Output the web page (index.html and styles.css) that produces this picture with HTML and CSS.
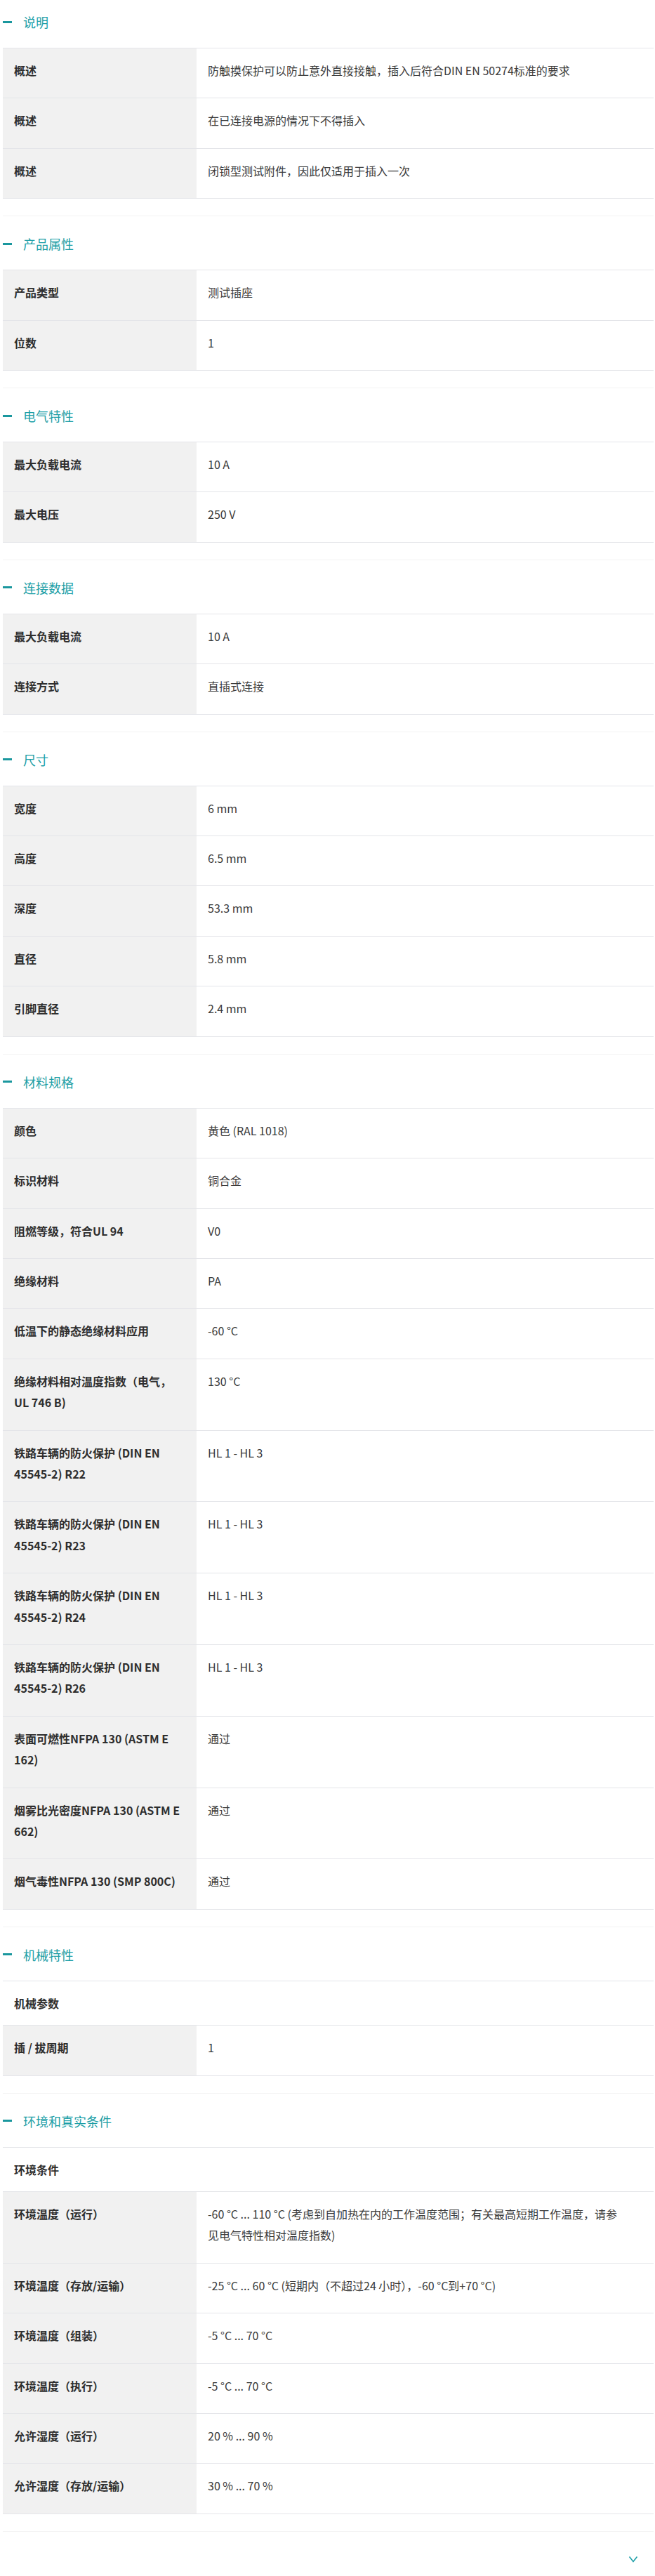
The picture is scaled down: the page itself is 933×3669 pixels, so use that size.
FILE: index.html
```html
<!DOCTYPE html>
<html lang="zh-CN">

<head>
    <meta charset="utf-8">
    <title>技术数据</title>
    <link rel="stylesheet" href="styles.css">
</head>

<body>
    <main class="specs">
        <section class="group">
            <h2 class="group-title"><span class="dash"></span>说明</h2>
            <div class="spec-table">
                <div class="row"><div class="label">概述</div><div class="value">防触摸保护可以防止意外直接接触，插入后符合DIN EN 50274标准的要求</div></div>
                <div class="row"><div class="label">概述</div><div class="value">在已连接电源的情况下不得插入</div></div>
                <div class="row"><div class="label">概述</div><div class="value">闭锁型测试附件，因此仅适用于插入一次</div></div>
            </div>
        </section>

        <section class="group">
            <h2 class="group-title"><span class="dash"></span>产品属性</h2>
            <div class="spec-table">
                <div class="row"><div class="label">产品类型</div><div class="value">测试插座</div></div>
                <div class="row"><div class="label">位数</div><div class="value">1</div></div>
            </div>
        </section>

        <section class="group">
            <h2 class="group-title"><span class="dash"></span>电气特性</h2>
            <div class="spec-table">
                <div class="row"><div class="label">最大负载电流</div><div class="value">10 A</div></div>
                <div class="row"><div class="label">最大电压</div><div class="value">250 V</div></div>
            </div>
        </section>

        <section class="group">
            <h2 class="group-title"><span class="dash"></span>连接数据</h2>
            <div class="spec-table">
                <div class="row"><div class="label">最大负载电流</div><div class="value">10 A</div></div>
                <div class="row"><div class="label">连接方式</div><div class="value">直插式连接</div></div>
            </div>
        </section>

        <section class="group">
            <h2 class="group-title"><span class="dash"></span>尺寸</h2>
            <div class="spec-table">
                <div class="row"><div class="label">宽度</div><div class="value">6 mm</div></div>
                <div class="row"><div class="label">高度</div><div class="value">6.5 mm</div></div>
                <div class="row"><div class="label">深度</div><div class="value">53.3 mm</div></div>
                <div class="row"><div class="label">直径</div><div class="value">5.8 mm</div></div>
                <div class="row"><div class="label">引脚直径</div><div class="value">2.4 mm</div></div>
            </div>
        </section>

        <section class="group">
            <h2 class="group-title"><span class="dash"></span>材料规格</h2>
            <div class="spec-table">
                <div class="row"><div class="label">颜色</div><div class="value">黄色 (RAL 1018)</div></div>
                <div class="row"><div class="label">标识材料</div><div class="value">铜合金</div></div>
                <div class="row"><div class="label">阻燃等级，符合UL 94</div><div class="value">V0</div></div>
                <div class="row"><div class="label">绝缘材料</div><div class="value">PA</div></div>
                <div class="row"><div class="label">低温下的静态绝缘材料应用</div><div class="value">-60 °C</div></div>
                <div class="row"><div class="label">绝缘材料相对温度指数（电气，UL 746 B)</div><div class="value">130 °C</div></div>
                <div class="row"><div class="label">铁路车辆的防火保护 (DIN EN 45545-2) R22</div><div class="value">HL 1 - HL 3</div></div>
                <div class="row"><div class="label">铁路车辆的防火保护 (DIN EN 45545-2) R23</div><div class="value">HL 1 - HL 3</div></div>
                <div class="row"><div class="label">铁路车辆的防火保护 (DIN EN 45545-2) R24</div><div class="value">HL 1 - HL 3</div></div>
                <div class="row"><div class="label">铁路车辆的防火保护 (DIN EN 45545-2) R26</div><div class="value">HL 1 - HL 3</div></div>
                <div class="row"><div class="label">表面可燃性NFPA 130 (ASTM E 162)</div><div class="value">通过</div></div>
                <div class="row"><div class="label">烟雾比光密度NFPA 130 (ASTM E 662)</div><div class="value">通过</div></div>
                <div class="row"><div class="label">烟气毒性NFPA 130 (SMP 800C)</div><div class="value">通过</div></div>
            </div>
        </section>

        <section class="group">
            <h2 class="group-title"><span class="dash"></span>机械特性</h2>
            <div class="spec-table">
                <div class="row subhead"><div class="label">机械参数</div></div>
                <div class="row"><div class="label">插 / 拔周期</div><div class="value">1</div></div>
            </div>
        </section>

        <section class="group">
            <h2 class="group-title"><span class="dash"></span>环境和真实条件</h2>
            <div class="spec-table">
                <div class="row subhead"><div class="label">环境条件</div></div>
                <div class="row"><div class="label">环境温度（运行）</div><div class="value">-60 °C ... 110 °C (考虑到自加热在内的工作温度范围；有关最高短期工作温度，请参见电气特性相对温度指数)</div></div>
                <div class="row"><div class="label">环境温度（存放/运输）</div><div class="value">-25 °C ... 60 °C (短期内（不超过24 小时），-60 °C到+70 °C)</div></div>
                <div class="row"><div class="label">环境温度（组装）</div><div class="value">-5 °C ... 70 °C</div></div>
                <div class="row"><div class="label">环境温度（执行）</div><div class="value">-5 °C ... 70 °C</div></div>
                <div class="row"><div class="label">允许湿度（运行）</div><div class="value">20 % ... 90 %</div></div>
                <div class="row"><div class="label">允许湿度（存放/运输）</div><div class="value">30 % ... 70 %</div></div>
            </div>
        </section>

        <div class="more">
            <button class="more-button" aria-label="展开">
                <svg width="14" height="10" viewBox="0 0 14 10">
                    <polyline points="1.5,1.5 7,8.5 12.5,1.5" fill="none" stroke="#1b9ea6" stroke-width="1.6"></polyline>
                </svg>
            </button>
        </div>
    </main>
</body>

</html>
```

FILE: styles.css
```css
:root {
    --teal: #1b9ea6;
    --line: #e4e5e9;
    font-family: "Noto Sans CJK SC", "Noto Sans", sans-serif;
}

body {
    margin: 0;
    padding: 0 2px 0 4px;
    background: white;
    color: #333;
}

.group {
    padding: 24px 0;
    border-bottom: 1px solid #f3f3f3;
}

.group:first-child {
    padding-top: 16px;
}

.group-title {
    display: flex;
    align-items: center;
    margin: 0 0 22px 0;
    font-size: 18px;
    font-weight: 400;
    line-height: 30px;
    color: var(--teal);
}

.dash {
    display: inline-block;
    width: 13px;
    height: 3px;
    margin-right: 16px;
    background: #1a979e;
}

.spec-table {
    border-top: 1px solid var(--line);
}

.row {
    display: grid;
    grid-template-columns: 276px 1fr;
    border-bottom: 1px solid var(--line);
    font-size: 16px;
    line-height: 30.4px;
}

.label {
    background: #f1f1f1;
    padding: 16px 20px 24px 16px;
    font-weight: 700;
    color: #2e2e2e;
}

.value {
    padding: 16px 44px 24px 16px;
    color: #3a3a3a;
}

.subhead {
    grid-template-columns: 1fr;
}

.subhead .label {
    background: transparent;
    padding-bottom: 16px;
}

.more {
    display: flex;
    justify-content: flex-end;
    height: 71px;
    padding: 32px 22px 0 0;
    box-sizing: border-box;
}

.more-button {
    background: transparent;
    border: none;
    padding: 0;
    width: 14px;
    height: 10px;
    cursor: pointer;
}
```
